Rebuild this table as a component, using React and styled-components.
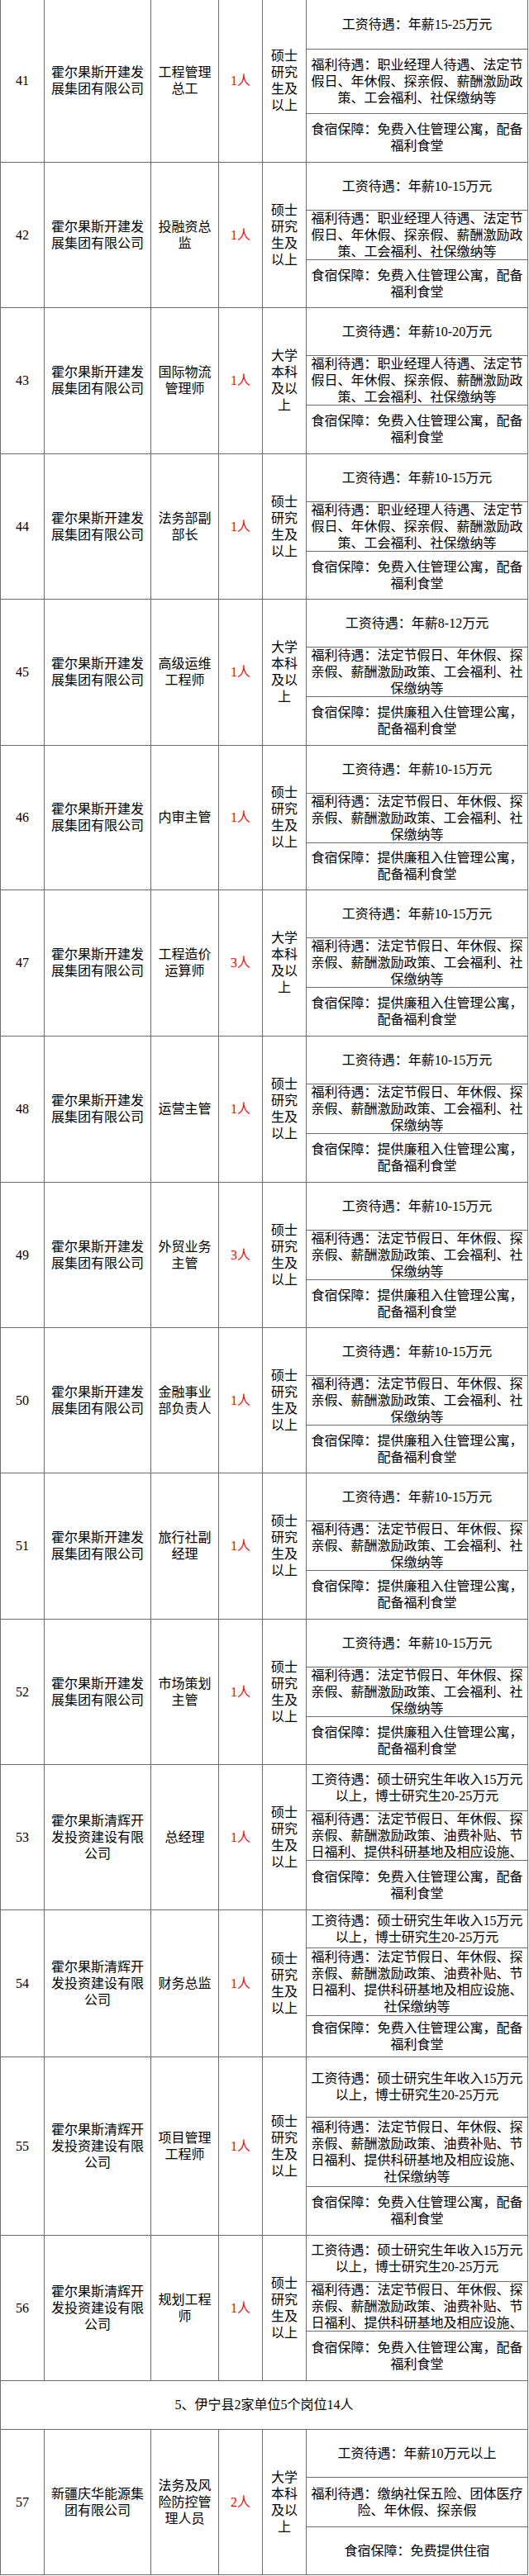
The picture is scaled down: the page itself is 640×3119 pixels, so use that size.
import React from 'react';
import styled, { createGlobalStyle } from 'styled-components';

const Global = createGlobalStyle`
  *, *::before, *::after { box-sizing: border-box; }
  html, body { margin: 0; padding: 0; background: #fff; }
  body {
    font-family: "Liberation Serif", "Noto Sans CJK SC", serif;
    color: #000;
    font-size: 16px;
  }
`;

const LINE = '#6e6e6e';

const Table = styled.div`
  width: 639px;
  border-left: 1px solid ${LINE};
`;

const Row = styled.div`
  display: grid;
  grid-template-columns: 53px 129px 82px 53px 53px 268px;
  height: ${p => p.$h}px;
`;

const BaseCell = styled.div`
  display: flex;
  align-items: center;
  justify-content: center;
  text-align: center;
  border-right: 1px solid ${LINE};
  border-bottom: 1px solid ${LINE};
  font-size: 16px;
  line-height: 20px;
  overflow: hidden;
`;

const IndexCell = styled(BaseCell)`
  padding: 0 2px;
`;

const CompanyCell = styled(BaseCell)`
  padding: 0 6px;
`;

const PositionCell = styled(BaseCell)`
  padding: 0 4px;
`;

const CountCell = styled(BaseCell)`
  color: #ff0000;
  padding: 0 2px;
  white-space: nowrap;
`;

const EduCell = styled(BaseCell)`
  padding: 0 8px;
`;

const BenefitStack = styled.div`
  display: flex;
  flex-direction: column;
  border-right: 1px solid ${LINE};
  border-bottom: 1px solid ${LINE};
  overflow: hidden;
`;

const BenefitItem = styled.div`
  display: flex;
  flex-direction: column;
  justify-content: safe center;
  text-align: center;
  padding: 0 4px;
  font-size: 16px;
  line-height: 20px;
  overflow: hidden;
  ${p => (p.$h ? `height: ${p.$h}px; flex: none; border-bottom: 1px solid ${LINE};` : 'flex: 1;')}
`;

const SectionRow = styled.div`
  height: ${p => p.$h}px;
  display: flex;
  align-items: center;
  justify-content: center;
  border-right: 1px solid ${LINE};
  border-bottom: 1px solid ${LINE};
  font-size: 16px;
  line-height: 20px;
`;

const CO1 = '霍尔果斯开建发展集团有限公司';
const CO2 = '霍尔果斯清辉开发投资建设有限公司';
const MS = '硕士研究生及以上';
const BA = '大学本科及以上';
const W1 = '福利待遇：职业经理人待遇、法定节假日、年休假、探亲假、薪酬激励政策、工会福利、社保缴纳等';
const L1 = '食宿保障：免费入住管理公寓，配备福利食堂';
const W2 = '福利待遇：法定节假日、年休假、探亲假、薪酬激励政策、工会福利、社保缴纳等';
const L2 = '食宿保障：提供廉租入住管理公寓，配备福利食堂';
const S3 = '工资待遇：硕士研究生年收入15万元以上，博士研究生20-25万元';
const W3 = '福利待遇：法定节假日、年休假、探亲假、薪酬激励政策、油费补贴、节日福利、提供科研基地及相应设施、社保缴纳等';

const rows = [
  { no: 41, h: 197, co: CO1, pos: '工程管理总工', n: '1人', edu: MS, s: '工资待遇：年薪15-25万元', w: W1, l: L1, sh: 60, wh: 78 },
  { no: 42, h: 176, co: CO1, pos: '投融资总监', n: '1人', edu: MS, s: '工资待遇：年薪10-15万元', w: W1, l: L1 },
  { no: 43, h: 177, co: CO1, pos: '国际物流管理师', n: '1人', edu: BA, s: '工资待遇：年薪10-20万元', w: W1, l: L1 },
  { no: 44, h: 176, co: CO1, pos: '法务部副部长', n: '1人', edu: MS, s: '工资待遇：年薪10-15万元', w: W1, l: L1 },
  { no: 45, h: 177, co: CO1, pos: '高级运维工程师', n: '1人', edu: BA, s: '工资待遇：年薪8-12万元', w: W2, l: L2 },
  { no: 46, h: 175, co: CO1, pos: '内审主管', n: '1人', edu: MS, s: '工资待遇：年薪10-15万元', w: W2, l: L2 },
  { no: 47, h: 177, co: CO1, pos: '工程造价运算师', n: '3人', edu: BA, s: '工资待遇：年薪10-15万元', w: W2, l: L2 },
  { no: 48, h: 177, co: CO1, pos: '运营主管', n: '1人', edu: MS, s: '工资待遇：年薪10-15万元', w: W2, l: L2 },
  { no: 49, h: 176, co: CO1, pos: '外贸业务主管', n: '3人', edu: MS, s: '工资待遇：年薪10-15万元', w: W2, l: L2 },
  { no: 50, h: 176, co: CO1, pos: '金融事业部负责人', n: '1人', edu: MS, s: '工资待遇：年薪10-15万元', w: W2, l: L2 },
  { no: 51, h: 177, co: CO1, pos: '旅行社副经理', n: '1人', edu: MS, s: '工资待遇：年薪10-15万元', w: W2, l: L2 },
  { no: 52, h: 176, co: CO1, pos: '市场策划主管', n: '1人', edu: MS, s: '工资待遇：年薪10-15万元', w: W2, l: L2 },
  { no: 53, h: 176, co: CO2, pos: '总经理', n: '1人', edu: MS, s: S3, w: W3, l: L1, sh: 56, wh: 60 },
  { no: 54, h: 178, co: CO2, pos: '财务总监', n: '1人', edu: MS, s: S3, w: W3, l: L1, sh: 46, wh: 82 },
  { no: 55, h: 216, co: CO2, pos: '项目管理工程师', n: '1人', edu: MS, s: S3, w: W3, l: L1, sh: 73, wh: 84 },
  { no: 56, h: 176, co: CO2, pos: '规划工程师', n: '1人', edu: MS, s: S3, w: W3, l: L1, sh: 56, wh: 60 },
];

const row57 = {
  no: 57, h: 176, co: '新疆庆华能源集团有限公司', pos: '法务及风险防控管理人员', n: '2人', edu: BA,
  s: '工资待遇：年薪10万元以上', w: '福利待遇：缴纳社保五险、团体医疗险、年休假、探亲假', l: '食宿保障：免费提供住宿',
};

function JobRow({ r }) {
  return (
    <Row $h={r.h}>
      <IndexCell>{r.no}</IndexCell>
      <CompanyCell>{r.co}</CompanyCell>
      <PositionCell>{r.pos}</PositionCell>
      <CountCell>{r.n}</CountCell>
      <EduCell>{r.edu}</EduCell>
      <BenefitStack>
        <BenefitItem $h={r.sh || 58}>{r.s}</BenefitItem>
        <BenefitItem $h={r.wh || 60}>{r.w}</BenefitItem>
        <BenefitItem>{r.l}</BenefitItem>
      </BenefitStack>
    </Row>
  );
}

export default function App() {
  return (
    <>
      <Global />
      <Table>
        {rows.map(r => <JobRow key={r.no} r={r} />)}
        <SectionRow $h={59}>5、伊宁县2家单位5个岗位14人</SectionRow>
        <JobRow r={row57} />
      </Table>
    </>
  );
}
